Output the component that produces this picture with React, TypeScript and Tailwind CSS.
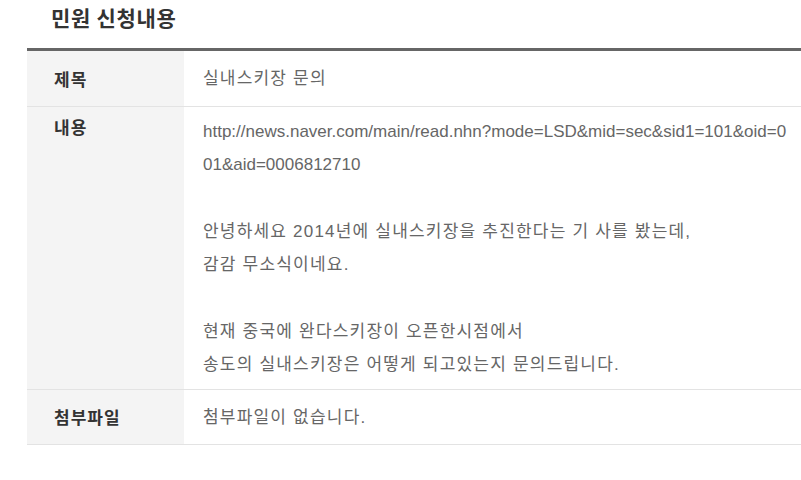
const FONT = "font-['Liberation_Sans','Noto_Sans_CJK_KR',sans-serif]";

function Row({
  label,
  children,
  top = false,
  className = "",
}: {
  label: string;
  children: React.ReactNode;
  top?: boolean;
  className?: string;
}) {
  return (
    <div className={`flex border-b border-[#e3e3e3] ${className}`}>
      <div
        className={`w-[157px] shrink-0 bg-[#f4f4f4] pl-[27px] text-[17px] font-bold tracking-[1px] text-[#333] flex ${
          top ? "items-start pt-[8px]" : "items-center"
        }`}
      >
        <span className="leading-[24px] font-['Noto_Sans_CJK_KR',sans-serif]">{label}</span>
      </div>
      <div
        className={`flex-1 pl-[19px] text-[17px] text-[#666] leading-[33.3px] flex whitespace-nowrap ${
          top ? "items-start py-2 flex-col" : "items-center"
        }`}
      >
        {children}
      </div>
    </div>
  );
}

const ko = "tracking-[1.2px]";

export default function App() {
  return (
    <div className={`w-[801px] h-[480px] bg-white overflow-hidden ${FONT}`}>
      <h2 className="pl-[51px] pt-[4px] h-[48px] text-[21px] font-bold tracking-[0.7px] text-[#333] leading-[26px] font-['Noto_Sans_CJK_KR',sans-serif]">
        민원 신청내용
      </h2>
      <div className="ml-[27px] border-t-[3px] border-[#666]">
        <Row label="제목" className="h-[56px]">
          <span className={ko}>실내스키장 문의</span>
        </Row>
        <Row label="내용" top>
          <p>
            http://news.naver.com/main/read.nhn?mode=LSD&amp;mid=sec&amp;sid1=101&amp;oid=0
            <br />
            01&amp;aid=0006812710
          </p>
          <p>&nbsp;</p>
          <p className={ko}>
            안녕하세요 2014년에 실내스키장을 추진한다는 기 사를 봤는데,
            <br />
            감감 무소식이네요.
          </p>
          <p>&nbsp;</p>
          <p className={ko}>
            현재 중국에 완다스키장이 오픈한시점에서
            <br />
            송도의 실내스키장은 어떻게 되고있는지 문의드립니다.
          </p>
        </Row>
        <Row label="첨부파일" className="h-[55px]">
          <span className={ko}>첨부파일이 없습니다.</span>
        </Row>
      </div>
    </div>
  );
}
